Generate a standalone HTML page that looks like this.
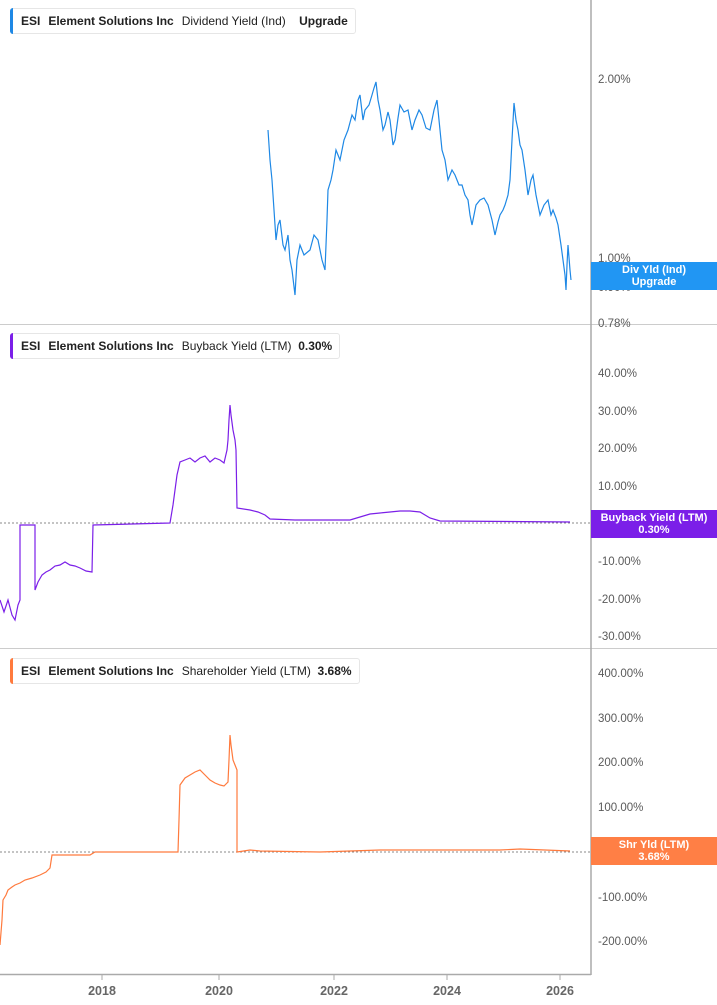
<!DOCTYPE html>
<html><head><meta charset="utf-8"><style>
body{margin:0;width:717px;height:1005px;background:#fff;overflow:hidden;font-family:"Liberation Sans",sans-serif;position:relative}
.leg{position:absolute;left:10px;height:24px;border:1px solid #e6e6e6;border-radius:3px;background:#fff;font-size:12px;line-height:24px;color:#222;padding:0 7px 0 10px;white-space:nowrap}
.leg:before{content:"";position:absolute;left:-1px;top:-1px;bottom:-1px;width:3px;border-radius:3px 0 0 3px;background:var(--c)}
.leg b{margin-right:8px}
.tag{position:absolute;left:591px;width:126px;color:#fff;font-weight:bold;font-size:11px;line-height:12px;text-align:center;padding:2px 0}
</style></head><body>
<svg width="717" height="1005" style="position:absolute;left:0;top:0" font-family="Liberation Sans,sans-serif" font-size="11.5" fill="#5a5a5a">
<line x1="0" y1="324.5" x2="717" y2="324.5" stroke="#ccc"/>
<line x1="0" y1="648.5" x2="717" y2="648.5" stroke="#ccc"/>
<line x1="591" y1="0" x2="591" y2="975" stroke="#aaa" stroke-width="1.5"/>
<line x1="0" y1="974.5" x2="591" y2="974.5" stroke="#aaa" stroke-width="1.5"/>
<g stroke="#aaa"><line x1="102" y1="974" x2="102" y2="980"/><line x1="219" y1="974" x2="219" y2="980"/><line x1="334" y1="974" x2="334" y2="980"/><line x1="447" y1="974" x2="447" y2="980"/><line x1="560" y1="974" x2="560" y2="980"/></g>
<g font-weight="bold" font-size="12.5" fill="#666" text-anchor="middle"><text x="102" y="995">2018</text><text x="219" y="995">2020</text><text x="334" y="995">2022</text><text x="447" y="995">2024</text><text x="560" y="995">2026</text></g>
<g><text x="598" y="83">2.00%</text><text x="598" y="262">1.00%</text><text x="598" y="291">0.90%</text><text x="598" y="327">0.78%</text>
<text x="598" y="377">40.00%</text><text x="598" y="415">30.00%</text><text x="598" y="452">20.00%</text><text x="598" y="490">10.00%</text><text x="598" y="527">0.00%</text><text x="598" y="565">-10.00%</text><text x="598" y="603">-20.00%</text><text x="598" y="640">-30.00%</text>
<text x="598" y="677">400.00%</text><text x="598" y="722">300.00%</text><text x="598" y="766">200.00%</text><text x="598" y="811">100.00%</text><text x="598" y="856">0.00%</text><text x="598" y="901">-100.00%</text><text x="598" y="945">-200.00%</text></g>
<g stroke="#888" stroke-dasharray="2,2"><line x1="0" y1="523" x2="591" y2="523"/><line x1="0" y1="852" x2="591" y2="852"/></g>
<polyline fill="none" stroke="#1e88e5" stroke-width="1.2" points="268,130 270,160 272,180 274,210 276,240 278,225 280,220 283,245 285,250 288,235 290,260 292,270 295,295 297,260 300,245 304,255 310,250 314,235 318,240 322,260 325,270 327,220 328,190 331,180 333,170 336,150 340,160 344,140 348,130 352,115 355,120 358,100 360,95 363,120 365,110 369,105 372,95 374,88 376,82 378,100 380,110 383,130 385,125 388,112 390,120 393,145 395,140 398,118 400,105 404,112 408,110 412,130 415,120 419,110 422,115 426,128 430,130 434,110 437,100 440,130 442,150 445,160 448,180 452,170 455,175 459,185 462,185 465,195 468,200 470,215 472,225 476,205 480,200 484,198 488,205 492,220 495,235 498,222 500,215 503,210 505,205 508,195 510,180 512,140 514,103 516,120 518,130 520,145 522,150 525,170 528,195 531,180 533,175 536,195 540,215 544,205 548,200 551,215 553,210 556,218 558,225 561,245 563,260 565,275 566,290 567,265 568,245 570,270 571,280"/>
<polyline fill="none" stroke="#7b1fe8" stroke-width="1.2" points="0,600 4,612 8,600 12,615 15,620 18,605 20,600 20,525 35,525 35,590 38,582 42,575 46,572 50,570 55,566 60,565 65,562 70,565 75,566 80,568 86,571 92,572 93,525 170,523 173,505 175,490 177,475 180,462 185,460 190,458 195,462 200,458 205,456 210,462 215,458 220,460 224,463 227,450 228,440 229,420 230,405 231,415 233,430 235,440 236,450 237,508 250,510 258,512 265,515 270,519 295,520 350,520 360,517 370,514 380,513 390,512 400,511 410,511 420,512 430,518 440,521 570,522"/>
<polyline fill="none" stroke="#ff7a3d" stroke-width="1.2" points="0,945 2,920 3,900 6,895 8,890 12,887 15,885 20,883 25,880 32,878 40,875 46,872 50,868 52,855 90,855 95,852 178,852 179,820 180,785 185,778 190,775 195,772 200,770 205,775 210,780 215,783 220,785 224,786 228,782 229,760 230,735 231,745 233,760 235,765 237,770 237,852 250,850 260,851 320,852 380,850 500,850 520,849 570,851"/>
</svg>
<div class="leg" style="--c:#1e88e5;top:8px"><b>ESI</b><b>Element Solutions Inc</b>Dividend Yield (Ind)&nbsp;&nbsp;&nbsp;&nbsp;<b style="margin:0">Upgrade</b></div>
<div class="leg" style="--c:#7b1fe8;top:333px"><b>ESI</b><b>Element Solutions Inc</b>Buyback Yield (LTM)&nbsp;&nbsp;<b style="margin:0">0.30%</b></div>
<div class="leg" style="--c:#ff7a3d;top:658px"><b>ESI</b><b>Element Solutions Inc</b>Shareholder Yield (LTM)&nbsp;&nbsp;<b style="margin:0">3.68%</b></div>
<div class="tag" style="top:262px;background:#2196f3">Div Yld (Ind)<br>Upgrade</div>
<div class="tag" style="top:510px;background:#7b1fe8">Buyback Yield (LTM)<br>0.30%</div>
<div class="tag" style="top:837px;background:#ff7f45">Shr Yld (LTM)<br>3.68%</div>
</body></html>
